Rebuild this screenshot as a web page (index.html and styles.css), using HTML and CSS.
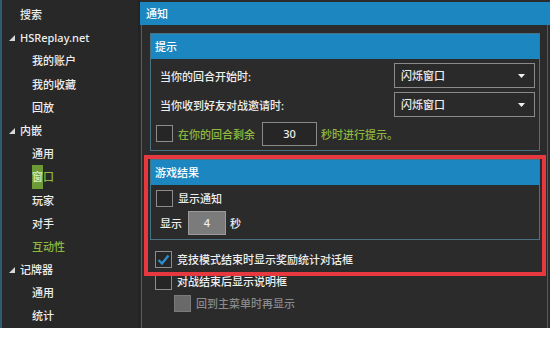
FILE: index.html
```html
<!DOCTYPE html>
<html lang="zh">
<head>
<meta charset="utf-8">
<title>通知设置</title>
<link rel="stylesheet" href="styles.css">
</head>
<body>
<div class="app">
  <nav class="side">
    <div class="item l0">搜索</div>
    <div class="item l0 exp"><svg class="tri" width="6" height="6" viewBox="0 0 6 6"><polygon points="6,0 6,6 0,6" fill="#d8d8d8"/></svg>HSReplay.net</div>
    <div class="item l1">我的账户</div>
    <div class="item l1">我的收藏</div>
    <div class="item l1">回放</div>
    <div class="item l0 exp"><svg class="tri" width="6" height="6" viewBox="0 0 6 6"><polygon points="6,0 6,6 0,6" fill="#d8d8d8"/></svg>内嵌</div>
    <div class="item l1">通用</div>
    <div class="item l1 green"><span class="hl">窗</span>口</div>
    <div class="item l1">玩家</div>
    <div class="item l1">对手</div>
    <div class="item l1 green">互动性</div>
    <div class="item l0 exp"><svg class="tri" width="6" height="6" viewBox="0 0 6 6"><polygon points="6,0 6,6 0,6" fill="#d8d8d8"/></svg>记牌器</div>
    <div class="item l1">通用</div>
    <div class="item l1">统计</div>
  </nav>
  <main class="main">
    <div class="title">通知</div>
    <div class="frame">
      <section class="group g1">
        <div class="ghead">提示</div>
        <div class="gbody">
          <div class="row">
            <span class="lbl">当你的回合开始时:</span>
            <div class="select">闪烁窗口<svg class="arrow" width="7" height="4" viewBox="0 0 7 4"><polygon points="0,0 7,0 3.5,4" fill="#f0f0f0"/></svg></div>
          </div>
          <div class="row">
            <span class="lbl">当你收到好友对战邀请时:</span>
            <div class="select">闪烁窗口<svg class="arrow" width="7" height="4" viewBox="0 0 7 4"><polygon points="0,0 7,0 3.5,4" fill="#f0f0f0"/></svg></div>
          </div>
          <div class="row crow">
            <span class="cb"></span>
            <span class="green">在你的回合剩余</span>
            <span class="num">30</span>
            <span class="green">秒时进行提示。</span>
          </div>
        </div>
      </section>
      <section class="group g2">
        <div class="ghead">游戏结果</div>
        <div class="gbody">
          <div class="line">
            <span class="cb"></span>
            <span>显示通知</span>
          </div>
          <div class="line dur">
            <span class="lbl">显示</span>
            <span class="secs">4</span>
            <span>秒</span>
          </div>
        </div>
      </section>
      <div class="opt">
        <span class="cb checked"><svg width="15" height="15" viewBox="0 0 15 15"><path d="M2.5 8 L6 11.5 L12.5 3.5" fill="none" stroke="#2b8fd2" stroke-width="2.2"/></svg></span>
        <span>竞技模式结束时显示奖励统计对话框</span>
      </div>
      <div class="opt">
        <span class="cb"></span>
        <span>对战结束后显示说明框</span>
      </div>
      <div class="opt sub">
        <span class="cb disabled"></span>
        <span class="dim">回到主菜单时再显示</span>
      </div>
    </div>
  </main>
  <div class="mark"></div>
</div>
</body>
</html>
```

FILE: styles.css
```css
* { box-sizing: border-box; }
html, body { margin: 0; padding: 0; background: #ffffff; }
body {
  width: 550px;
  height: 342px;
  overflow: hidden;
  font-family: "Noto Sans", "Noto Sans CJK SC", sans-serif;
  font-size: 11px;
  font-weight: 500;
  color: #eeeeee;
}
.app {
  position: relative;
  display: flex;
  height: 328px;
  background: #2b2b2b;
}
.side {
  width: 140px;
  flex: none;
  background: #282828;
  border-left: 2px solid #2d5b70;
  border-right: 2px solid #232323;
  padding-top: 3px;
}
.item {
  height: 23.2px;
  line-height: 23.2px;
  white-space: nowrap;
  display: flex;
  align-items: center;
}
.l0 { padding-left: 18px; }
.l0.exp { padding-left: 7px; }
.tri { margin-right: 5px; flex: none; }
.l1 { padding-left: 30px; }
.green { color: #8fb83f; }
.hl { background: #6d9a36; color: #d8ecb8; }
.main {
  flex: 1;
  display: flex;
  flex-direction: column;
  min-width: 0;
}
.title {
  margin-top: 2px;
  height: 23px;
  line-height: 23px;
  background: #1b86c0;
  color: #ffffff;
  padding-left: 6px;
}
.frame {
  flex: 1;
  margin: 0 2px 0 1px;
  border-left: 1px solid #3d6476;
  border-right: 1px solid #3d6476;
  padding: 8px 0 0 8px;
}
.group {
  width: 390px;
  border: 1px solid #4b7184;
}
.g2 { margin-top: 8px; }
.ghead {
  height: 25px;
  line-height: 25px;
  background: #1b86c0;
  color: #ffffff;
  padding-left: 4px;
}
.gbody { padding: 4px 4px 4px 5px; }
.row {
  display: flex;
  align-items: center;
  justify-content: space-between;
  height: 25px;
}
.row + .row { margin-top: 4px; }
.lbl { padding-left: 4px; }
.select {
  width: 141px;
  height: 25px;
  border: 1px solid #8a8a8a;
  background: #2a2a2a;
  display: flex;
  align-items: center;
  justify-content: space-between;
  padding: 0 9px 0 6px;
  line-height: 23px;
}
.crow {
  justify-content: flex-start;
  margin-top: 4px;
}
.cb {
  width: 17px;
  height: 17px;
  flex: none;
  border: 1px solid #8c8c8c;
  background: #262626;
  margin-right: 5px;
  display: flex;
  align-items: center;
  justify-content: center;
}
.cb.disabled { background: #696969; border-color: #7a7a7a; }
.num {
  width: 55px;
  height: 24px;
  line-height: 22px;
  border: 1px solid #8a8a8a;
  background: #262626;
  text-align: center;
  margin: 0 4px 0 7px;
}
.line {
  display: flex;
  align-items: center;
  height: 18px;
}
.dur {
  height: 24px;
  margin-top: 4px;
}
.secs {
  width: 38px;
  height: 24px;
  line-height: 22px;
  margin: 0 4px 0 6px;
  background: #7b7b7b;
  border: 1px solid #9a9a9a;
  color: #f0f0f0;
  text-align: center;
}
.opt {
  display: flex;
  align-items: center;
  height: 22px;
  padding-left: 5px;
}
.g2 + .opt { margin-top: 8px; }
.opt.sub { padding-left: 24px; }
.dim { color: #8a8a8a; }
.mark {
  position: absolute;
  left: 144px;
  top: 155px;
  width: 402px;
  height: 121px;
  border: 4px solid #e5393f;
  pointer-events: none;
}
```
